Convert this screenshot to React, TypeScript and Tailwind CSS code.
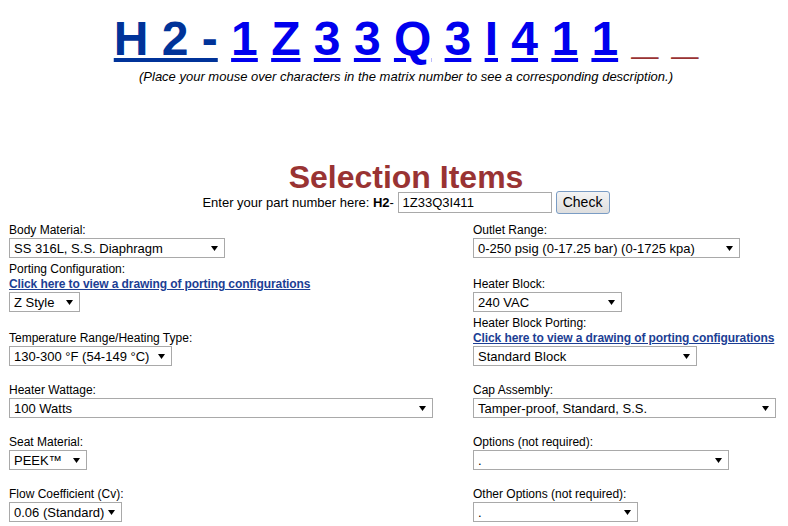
import React from "react";

const Arrow = () => (
	<svg width="7" height="5" viewBox="0 0 7 5" className="shrink-0">
		<polygon points="0,0 7,0 3.5,5" fill="#000" />
	</svg>
);

function Select({ value, width }: { value: string; width: number }) {
	return (
		<div
			className="flex h-[20px] items-center justify-between border border-[#a9a9a9] bg-white pl-[4px] pr-[6px] text-[13px] leading-none text-black"
			style={{ width }}
		>
			<span className="whitespace-nowrap">{value}</span>
			<Arrow />
		</div>
	);
}

function Field({
	label,
	value,
	width,
	link,
}: {
	label: string;
	value: string;
	width: number;
	link?: boolean;
}) {
	return (
		<div className="flex flex-col items-start self-end">
			<span className="text-[12px] leading-[15px]">{label}</span>
			{link && (
				<a
					href="#"
					className="whitespace-nowrap text-[12px] font-bold leading-[15px] tracking-[-0.1px] text-[#1c3e94] underline"
				>
					Click here to view a drawing of porting configurations
				</a>
			)}
			<Select value={value} width={width} />
		</div>
	);
}

const chars = ["1", "Z", "3", "3", "Q", "3", "I", "4", "1", "1"];

export default function App() {
	return (
		<div className="h-[526px] w-[788px] overflow-hidden bg-white font-['Liberation_Sans',Arial,sans-serif] text-black">
			<div className="ml-[9px] w-[794px]">
				<div className="whitespace-pre pt-[11px] text-center text-[48px] font-bold leading-[55px]">
					<a href="#" className="text-[#003399] underline">
						H 2 -
					</a>
					{chars.map((c, i) => (
						<React.Fragment key={i}>
							{" "}
							<a href="#" className="text-[#0000ee] underline">
								{c}
							</a>
						</React.Fragment>
					))}{" "}
					<span className="relative -top-[2px] text-[#993333]">_</span>{" "}
					<span className="relative -top-[2px] text-[#993333]">_</span>
				</div>
				<p className="mt-[3px] text-center text-[13px] italic leading-[15px]">
					(Place your mouse over characters in the matrix number to see a
					corresponding description.)
				</p>
				<h1 className="mt-[78px] text-center text-[32px] font-bold leading-[30px] text-[#993333]">
					Selection Items
				</h1>
				<div className="-mt-[1px] flex h-[23px] items-center justify-center text-[13px]">
					<span>Enter your part number here:&nbsp;</span>
					<b>H2</b>
					<span>-&nbsp;</span>
					<div className="flex h-[21px] w-[154px] items-center border border-[#a9a9a9] bg-white pl-[4px] text-[13px]">
						1Z33Q3I411
					</div>
					<button className="ml-[4px] h-[23px] w-[54px] rounded-[3px] border border-[#7a9cc4] bg-gradient-to-b from-[#f4f4f4] to-[#dedede] text-[14px]">
						Check
					</button>
				</div>
				<div className="mt-[9px] grid grid-cols-[464px_1fr] grid-rows-[35px_50px_50px_48px_48px_48px] gap-y-[4px]">
					<Field label="Body Material:" value="SS 316L, S.S. Diaphragm" width={216} />
					<Field
						label="Outlet Range:"
						value="0-250 psig (0-17.25 bar) (0-1725 kpa)"
						width={267}
					/>
					<Field label="Porting Configuration:" value="Z Style" width={71} link />
					<Field label="Heater Block:" value="240 VAC" width={149} />
					<Field
						label="Temperature Range/Heating Type:"
						value="130-300 °F (54-149 °C)"
						width={163}
					/>
					<Field
						label="Heater Block Porting:"
						value="Standard Block"
						width={224}
						link
					/>
					<Field label="Heater Wattage:" value="100 Watts" width={424} />
					<Field
						label="Cap Assembly:"
						value="Tamper-proof, Standard, S.S."
						width={303}
					/>
					<Field label="Seat Material:" value="PEEK™" width={78} />
					<Field label="Options (not required):" value="." width={256} />
					<Field label="Flow Coefficient (Cv):" value="0.06 (Standard)" width={113} />
					<Field label="Other Options (not required):" value="." width={165} />
				</div>
			</div>
		</div>
	);
}
